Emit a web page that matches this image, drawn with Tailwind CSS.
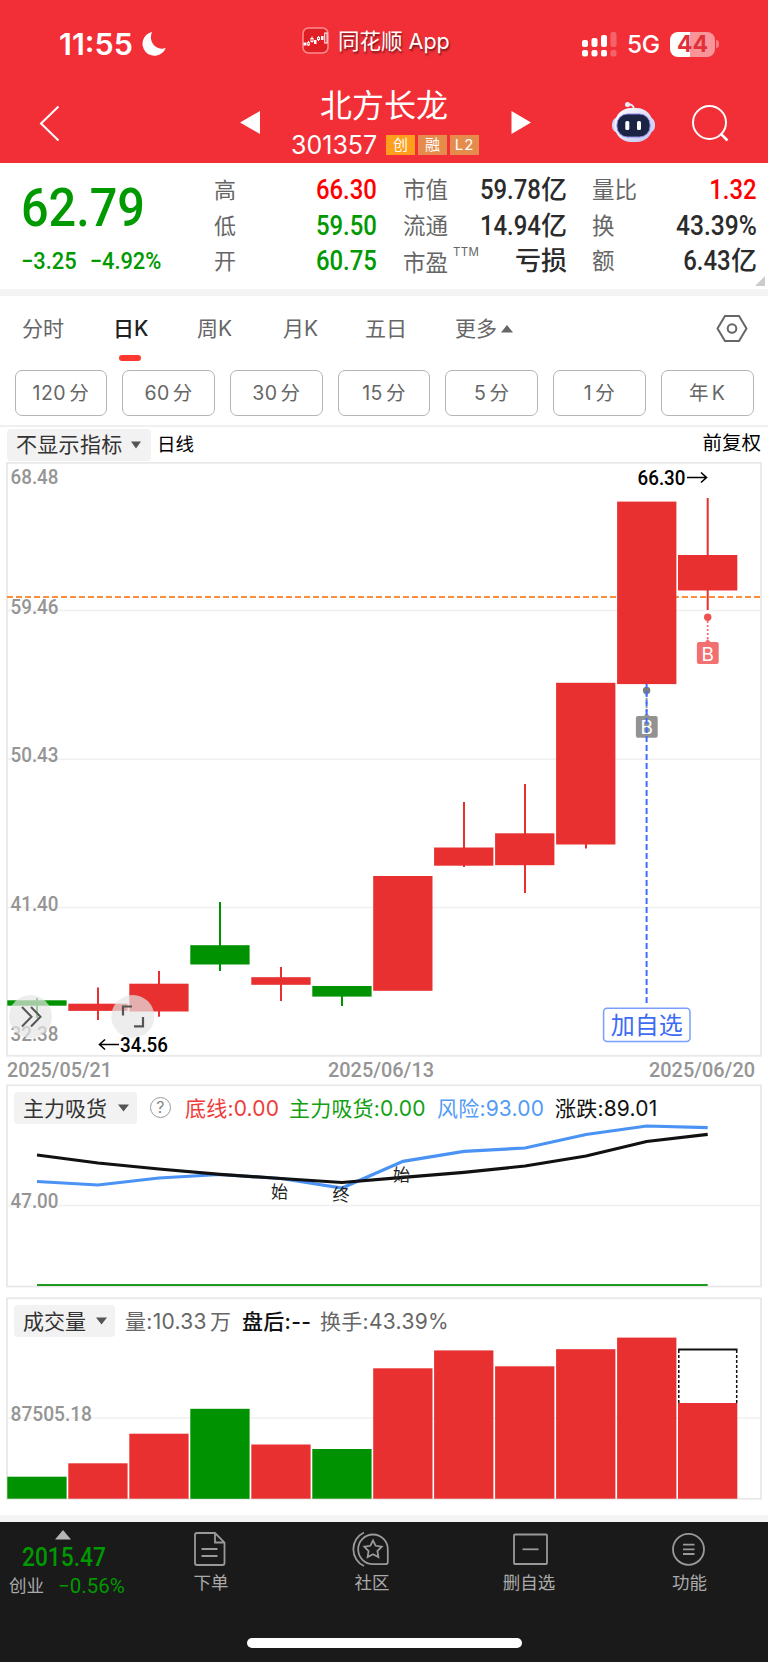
<!DOCTYPE html>
<html lang="zh-Hans">
<head>
    <meta charset="UTF-8">
    <meta name="viewport" content="width=device-width, initial-scale=1.0">
    <title>北方长龙 301357</title>
    <script src="https://cdn.jsdelivr.net/npm/@tailwindcss/browser@4"></script>
</head>
<body class="w-[768px] h-[1662px] overflow-hidden bg-white font-['Inter','Noto_Sans_CJK_SC',sans-serif] text-[#666]">

    <!-- 顶部红色区域 -->
    <header class="h-[163px] bg-[#f22f37] text-white">
        <!-- 状态栏 -->
        <div class="h-[84px] flex items-center">
            <div class="w-[302px] pl-[59px] flex items-center gap-[9px] pt-1">
                <span class="w-[74px] text-[30.5px] leading-none font-semibold whitespace-nowrap">11:55</span>
                <svg class="w-6 h-6" viewBox="0 0 24 24" fill="#fff"><path d="M10 0A12 12 0 1 0 23.8 15.8C15.5 19.500 5.500 10.500 10 0Z"/></svg>
            </div>
            <svg class="w-[27px] h-[27px] mt-[-3px]" viewBox="0 0 27 27" fill="none">
                <rect x="1" y="1" width="25" height="25" rx="5.500" fill="#e01f25" stroke="#fa8d8f" stroke-width="1.500"/>
                <g fill="#fff"><rect x="1.500" y="15.500" width="3" height="3"/><rect x="12" y="13" width="2.500" height="4"/><rect x="19" y="9" width="2.500" height="4"/></g>
                <g stroke="#fff"><path d="M6.500 14v5M10 9.500v6M16.500 9v5"/><rect x="5.700" y="15.500" width="1.600" height="2.500" fill="#e01f25"/><rect x="9" y="11.500" width="2" height="3" fill="#e01f25"/><rect x="15.500" y="10.500" width="2" height="2" fill="#e01f25"/><rect x="22.700" y="6" width="2.300" height="10"/></g>
            </svg>
            <span class="w-[244px] pl-[9px] text-[21.5px] leading-none whitespace-nowrap text-shadow-[1px_2px_2px_rgb(0_0_0/0.5)]">同花顺 App</span>
            <div class="pl-[9px] flex items-center pt-1">
                <svg class="w-[36px] h-[25px]" viewBox="0 0 36 25" fill="#fff">
                    <rect x="0" y="8" width="6" height="7" rx="2"/><rect x="9.500" y="6" width="6" height="9" rx="2"/><rect x="19" y="3" width="6" height="12" rx="2"/><rect x="28.500" y="0" width="6" height="15" rx="2" fill-opacity=".25"/>
                    <rect x="0" y="18" width="6" height="6.500" rx="2"/><rect x="9.500" y="18" width="6" height="6.500" rx="2"/><rect x="19" y="18" width="6" height="6.500" rx="2"/><rect x="28.500" y="18" width="6" height="6.500" rx="2" fill-opacity=".25"/>
                </svg>
                <span class="w-[43px] pl-[9px] text-[24.5px] leading-none font-medium tracking-[-0.3px]">5G</span>
                <div class="ml-[9px] w-[45px] h-[25px] rounded-[8px] bg-linear-to-r from-white from-45% to-[#f89599] to-45% text-center text-[23px] leading-[25px] font-bold text-[#e0303a]">44</div>
                <div class="ml-px w-[3px] h-2 rounded-r-full bg-[#f7777c]"></div>
            </div>
        </div>
        <!-- 股票名称栏 -->
        <div class="h-[79px] flex">
            <svg class="w-[280px] h-[79px]" viewBox="0 0 280 79"><path d="M58.500 22.500L41 39.500L58.500 56.500" fill="none" stroke="#fff" stroke-width="2"/><path d="M240 38.500L260 27V50Z" fill="#fff"/></svg>
            <div class="w-[210px]">
                <h1 class="pl-[40px] pt-[5px] text-[32px] leading-[34px] font-normal whitespace-nowrap">北方长龙</h1>
                <div class="pl-[11px] mt-[10px] flex gap-[3px] items-center">
                    <span class="w-[92px] text-[25px] leading-[24px]">301357</span>
                    <span class="w-[29px] h-5 bg-[#ff9d1c] text-center text-[15px] leading-5">创</span>
                    <span class="w-[29px] h-5 bg-[#e58b4b] text-center text-[15px] leading-5">融</span>
                    <span class="w-[29px] h-5 bg-[#e58b4b] text-center text-[15px] leading-5 tracking-[1px]">L2</span>
                </div>
            </div>
            <svg class="w-[278px] h-[79px]" viewBox="490 84 278 79" fill="none">
                <defs>
                    <linearGradient id="bot" x1="0" y1="0" x2="1" y2="1"><stop offset="0" stop-color="#fff"/><stop offset="1" stop-color="#bfc5f2"/></linearGradient>
                </defs>
                <path d="M511.500 111V134L531 122.500Z" fill="#fff"/>
                <path d="M628 104.500Q634 104 634 110" stroke="#e6e8fa" stroke-width="2"/>
                <circle cx="627.500" cy="104.500" r="2.500" fill="#eef"/>
                <rect x="612" y="117" width="43" height="16" rx="7" fill="#d3d7f8"/>
                <rect x="614.500" y="108" width="38.500" height="34" rx="16.500" fill="url(#bot)"/>
                <rect x="617" y="114" width="33" height="23" rx="10.500" fill="#1c2445" stroke="#8d83e6" stroke-width="1"/>
                <rect x="625.300" y="121" width="4" height="9" rx="1.500" fill="#fff"/><rect x="637" y="121" width="4" height="9" rx="1.500" fill="#fff"/>
                <circle cx="709.500" cy="122.500" r="16.500" stroke="#fff" stroke-width="2"/>
                <path d="M720.500 133.500L727.500 140.500" stroke="#fff" stroke-width="2.500"/>
            </svg>
        </div>
    </header>

    <!-- 行情数据 -->
    <section class="relative h-[126px] flex font-['Roboto','Noto_Sans_CJK_SC',sans-serif]">
        <div class="w-[214px] pl-[21px] text-[#090]">
            <div class="pt-[17px] text-[54px] leading-[56px] font-medium origin-left scale-x-[0.9]">62.79</div>
            <div class="mt-[13px] text-[23.5px] leading-[24px] font-medium origin-left scale-x-[0.93] whitespace-nowrap">−3.25<span class="ml-[14px]">−4.92%</span></div>
        </div>
        <dl class="w-[163px] pt-[10px] text-[22px] leading-[35.5px]">
            <div class="flex justify-between h-[35.5px]"><dt>高</dt><dd class="text-[27px] font-medium text-[#f00] origin-right scale-x-[0.885]">66.30</dd></div>
            <div class="flex justify-between h-[35.5px]"><dt>低</dt><dd class="text-[27px] font-medium text-[#090] origin-right scale-x-[0.885]">59.50</dd></div>
            <div class="flex justify-between h-[35.5px]"><dt>开</dt><dd class="text-[27px] font-medium text-[#090] origin-right scale-x-[0.885]">60.75</dd></div>
        </dl>
        <dl class="ml-[26px] w-[164px] pt-[10px] text-[22.5px] leading-[35.5px]">
            <div class="flex justify-between h-[35.5px]"><dt>市值</dt><dd class="flex font-medium text-[#2b2b2b]"><span class="text-[27px] origin-right scale-x-[0.885]">59.78</span><span class="text-[26px]">亿</span></dd></div>
            <div class="flex justify-between h-[35.5px]"><dt>流通</dt><dd class="flex font-medium text-[#2b2b2b]"><span class="text-[27px] origin-right scale-x-[0.885]">14.94</span><span class="text-[26px]">亿</span></dd></div>
            <div class="flex h-[35.5px]"><dt class="pt-[2px]">市盈</dt><span class="ml-[5px] mt-[-9px] font-['Inter'] text-[11.5px] tracking-[0.3px]">TTM</span><dd class="ml-auto text-[26px] font-medium text-[#2b2b2b]">亏损</dd></div>
        </dl>
        <dl class="ml-[25px] w-[165px] pt-[10px] text-[22.5px] leading-[35.5px]">
            <div class="flex justify-between h-[35.5px]"><dt>量比</dt><dd class="text-[27px] font-medium text-[#f00] origin-right scale-x-[0.885]">1.32</dd></div>
            <div class="flex justify-between h-[35.5px]"><dt>换</dt><dd class="text-[27px] font-medium text-[#2b2b2b] origin-right scale-x-[0.91]">43.39%</dd></div>
            <div class="flex justify-between h-[35.5px]"><dt>额</dt><dd class="flex font-medium text-[#2b2b2b]"><span class="text-[27px] origin-right scale-x-[0.885]">6.43</span><span class="text-[26px]">亿</span></dd></div>
        </dl>
        <svg class="absolute right-[3px] bottom-[3px] w-[10px] h-[10px]" viewBox="0 0 10 10"><path d="M10 0V10H0Z" fill="#ccc"/></svg>
    </section>
    <div class="h-[7px] bg-[#f4f4f4]"></div>

    <!-- K线周期 -->
    <nav class="relative h-[74px] pt-[16px] pl-[22px] flex text-[21px] leading-[33px] whitespace-nowrap">
        <span class="w-[91px]">分时</span>
        <span class="w-[84px] font-medium text-[#222]">日K</span>
        <span class="w-[86px]">周K</span>
        <span class="w-[82px]">月K</span>
        <span class="w-[90px]">五日</span>
        <span class="w-[46px]">更多</span>
        <svg class="w-[12px] h-[32px]" viewBox="0 0 12 32"><path d="M6 13L12 20.500H0Z" fill="#666"/></svg>
        <svg class="ml-[203px] w-[32px] h-[32px]" viewBox="0 0 32 32" fill="none" stroke="#666" stroke-width="2"><path d="M9 4H23L30.500 16.500L23 29H9L1.500 16.500Z"/><circle cx="16" cy="16.500" r="4.300"/></svg>
        <div class="absolute left-[119px] top-[59px] w-[22px] h-[6px] rounded-full bg-[#ff3830]"></div>
    </nav>
    <div class="h-[55px] px-[14.5px] flex gap-[15px] text-[19.5px] leading-[45px] text-center tracking-[0.5px] [word-spacing:-3px]">
        <span class="w-[93px] h-[46px] rounded-[7px] border border-[#b4b4b4]">120 分</span>
        <span class="w-[93px] h-[46px] rounded-[7px] border border-[#b4b4b4]">60 分</span>
        <span class="w-[93px] h-[46px] rounded-[7px] border border-[#b4b4b4]">30 分</span>
        <span class="w-[93px] h-[46px] rounded-[7px] border border-[#b4b4b4]">15 分</span>
        <span class="w-[93px] h-[46px] rounded-[7px] border border-[#b4b4b4]">5 分</span>
        <span class="w-[93px] h-[46px] rounded-[7px] border border-[#b4b4b4]">1 分</span>
        <span class="w-[93px] h-[46px] rounded-[7px] border border-[#b4b4b4]">年 K</span>
    </div>

    <!-- 指标选择 -->
    <div class="h-[37px] border-t-2 border-[#f0f0f0] pl-[7px] pr-[7px] flex text-[21px] leading-[31px] text-[#333]">
        <div class="mt-[2px] w-[144px] h-[32px] pl-[9px] rounded-[4px] bg-[#f2f2f2] flex tracking-[0.3px] whitespace-nowrap">不显示指标
            <svg class="ml-[8px] w-[10px] h-[32px]" viewBox="0 0 10 32"><path d="M0 12.500H10L5 19.500Z" fill="#555"/></svg>
        </div>
        <span class="ml-[6px] mt-[2px] text-[18.5px] text-black">日线</span>
        <span class="ml-auto text-[19.5px] leading-[32px] text-black">前复权</span>
    </div>

    <!-- K线主图 -->
    <svg class="block w-[768px] h-[622px] font-['Roboto','Noto_Sans_CJK_SC',sans-serif]" viewBox="0 462 768 622" fill="none">
        <g stroke="#f0f0f0" stroke-width="1.500"><path d="M7 610.500H761M7 759.300H761M7 907.500H761"/></g>
        <rect x="7" y="462.800" width="754" height="593" stroke="#e8e8e8" stroke-width="1.800"/>
        <g fill="#959595" font-size="21" font-weight="500">
            <text x="10.500" y="483.500" textLength="48" lengthAdjust="spacingAndGlyphs">68.48</text>
            <text x="10.500" y="614" textLength="48" lengthAdjust="spacingAndGlyphs">59.46</text>
            <text x="10.500" y="762" textLength="48" lengthAdjust="spacingAndGlyphs">50.43</text>
            <text x="10.500" y="910.500" textLength="48" lengthAdjust="spacingAndGlyphs">41.40</text>
            <text x="10.500" y="1041" textLength="48" lengthAdjust="spacingAndGlyphs">32.38</text>
            <text x="7" y="1077" textLength="105" lengthAdjust="spacingAndGlyphs">2025/05/21</text>
            <text x="328" y="1077" textLength="106" lengthAdjust="spacingAndGlyphs">2025/06/13</text>
            <text x="649" y="1077" textLength="106" lengthAdjust="spacingAndGlyphs">2025/06/20</text>
        </g>
        <path d="M7 597H761" stroke="#fc8f3d" stroke-width="2" stroke-dasharray="6 3"/>
        <!-- 阴线 -->
        <g fill="#009200">
            <rect x="7.300" y="1000.300" width="59.300" height="5.400"/><rect x="36" y="998" width="2" height="20"/>
            <rect x="190.300" y="945.200" width="59.300" height="19.300"/><rect x="219" y="902" width="2" height="69"/>
            <rect x="312.300" y="986" width="59.300" height="10.600"/><rect x="341" y="986" width="2" height="20"/>
        </g>
        <!-- 阳线 -->
        <g fill="#e83030">
            <rect x="68.300" y="1003.700" width="59.300" height="7.200"/><rect x="97" y="987.500" width="2" height="32.500"/>
            <rect x="129.300" y="983.700" width="59.300" height="27.800"/><rect x="158" y="971" width="2" height="45.700"/>
            <rect x="251.300" y="977.200" width="59.300" height="7.600"/><rect x="280" y="967" width="2" height="34"/>
            <rect x="373.200" y="876" width="59.300" height="114.800"/>
            <rect x="434.100" y="847.500" width="59.300" height="18.200"/><rect x="463" y="802" width="2" height="65"/>
            <rect x="495.100" y="833.300" width="59.300" height="31.900"/><rect x="524" y="784" width="2" height="109"/>
            <rect x="556.100" y="682.800" width="59.300" height="161.700"/><rect x="585" y="844" width="2" height="4.500"/>
            <rect x="617.100" y="501.600" width="59.300" height="182.500"/>
            <rect x="678" y="555" width="59.300" height="35.500"/><rect x="706.700" y="498" width="2" height="112"/>
        </g>
        <!-- 高低价标注 -->
        <g fill="#000" font-size="21" font-weight="500">
            <text x="637.500" y="485" textLength="48" lengthAdjust="spacingAndGlyphs">66.30</text>
            <text x="120" y="1051.500" textLength="48" lengthAdjust="spacingAndGlyphs">34.56</text>
        </g>
        <path d="M687 477.500H706M701 472.500L706.500 477.500L701 482.500M119 1044.500H100M105 1039.500L99.500 1044.500L105 1049.500" stroke="#000" stroke-width="1.600"/>
        <!-- 买点 -->
        <circle cx="707.700" cy="617.200" r="3.700" fill="#ef5050"/>
        <path d="M707.700 621V640" stroke="#f27070" stroke-width="1.800" stroke-dasharray="2 2"/>
        <path d="M707.700 639L711.500 643H704Z" fill="#f27070"/>
        <rect x="696.900" y="642" width="21.800" height="22" rx="2" fill="#f27070"/>
        <text x="707.800" y="660.500" text-anchor="middle" font-size="19" fill="#fff" font-family="Inter">B</text>
        <circle cx="646.600" cy="690.500" r="3.700" fill="#7b7b7b"/>
        <path d="M646.600 694V714" stroke="#929292" stroke-width="1.800" stroke-dasharray="2 2"/>
        <path d="M646.600 713L650.500 717H643Z" fill="#929292"/>
        <rect x="635.900" y="716" width="21.800" height="21.800" rx="2" fill="#929292"/>
        <text x="646.800" y="734" text-anchor="middle" font-size="19" fill="#fff" font-family="Inter">B</text>
        <path d="M646.600 684V1003" stroke="#3c6ffc" stroke-width="2" stroke-dasharray="6 3" stroke-dashoffset="2"/>
        <rect x="603.600" y="1008.200" width="86.400" height="33.300" rx="3.500" fill="#fff" stroke="#7c9efb" stroke-width="1.500"/>
        <text x="646.800" y="1033.500" text-anchor="middle" font-size="24" fill="#3c6cf5">加自选</text>
        <!-- 浮动按钮 -->
        <circle cx="30.500" cy="1016.500" r="21.500" fill="#e6e6e6" fill-opacity=".7"/>
        <path d="M22 1007L31.500 1016.700L22 1026.500M31 1007L40.500 1016.700L31 1026.500" stroke="#555" stroke-width="2"/>
        <circle cx="132.800" cy="1016.500" r="21.500" fill="#e6e6e6" fill-opacity=".7"/>
        <path d="M123 1015.500V1006.500H132M134 1026.300H143V1017" stroke="#555" stroke-width="2.200"/>
    </svg>

    <!-- 主力吸货 -->
    <section class="h-[213px] relative">
        <svg class="block w-[768px] h-[213px] font-['Roboto','Noto_Sans_CJK_SC',sans-serif]" viewBox="0 1084 768 213" fill="none">
            <path d="M7 1205.500H761" stroke="#f0f0f0" stroke-width="1.500"/>
            <rect x="7" y="1085.300" width="754" height="201.200" stroke="#e8e8e8" stroke-width="1.800"/>
            <text x="10.500" y="1208" font-size="21" font-weight="500" fill="#959595" textLength="48" lengthAdjust="spacingAndGlyphs">47.00</text>
            <path d="M37 1285H707.700" stroke="#1f9a1f" stroke-width="2"/>
            <polyline points="37,1181.500 98,1185 159,1178 220,1174.500 281,1178.500 342,1188 403,1161.300 464,1151.300 525,1148 586,1134.500 646.600,1126 707.700,1127.700" stroke="#4a93f5" stroke-width="3.200"/>
            <polyline points="37,1155 98,1163 159,1169 220,1174.300 281,1178.500 342,1182.500 403,1177.300 464,1172.300 525,1166 586,1156 646.600,1141.500 707.700,1134.300" stroke="#111" stroke-width="3.200"/>
            <g font-size="17" fill="#222" text-anchor="middle"><text x="279.500" y="1197.500">始</text><text x="341" y="1201">终</text><text x="401.500" y="1180.500">始</text></g>
        </svg>
        <!-- 指标数值 -->
        <div class="absolute left-[14px] top-[8px] flex h-[32px] text-[21px] leading-[34px] tracking-[0.2px] whitespace-nowrap">
            <div class="w-[123px] pl-[9px] rounded-[4px] bg-[#f2f2f2] flex tracking-normal leading-[33px] text-[#333]">主力吸货
                <svg class="ml-[11px] w-[11px] h-[32px]" viewBox="0 0 11 32"><path d="M0 12.500H11L5.500 19.500Z" fill="#555"/></svg>
            </div>
            <span class="ml-[13px] mt-[5px] w-[21px] h-[21px] rounded-full border-[1.5px] border-[#999] text-center text-[16px] leading-[19px] text-[#888]">?</span>
            <span class="ml-[14px] w-[104px] text-[#f03b3b]">底线:0.00</span>
            <span class="w-[148px] text-[#12a012]">主力吸货:0.00</span>
            <span class="w-[118px] text-[#549bf5]">风险:93.00</span>
            <span class="text-[#111]">涨跌:89.01</span>
        </div>
    </section>

    <!-- 成交量 -->
    <section class="h-[218px] relative">
        <svg class="block w-[768px] h-[218px] font-['Roboto',sans-serif]" viewBox="0 1297 768 218" fill="none">
            <path d="M7 1418H761" stroke="#f0f0f0" stroke-width="1.500"/>
            <rect x="7" y="1298.300" width="754" height="200.500" stroke="#e8e8e8" stroke-width="1.800"/>
            <text x="10.500" y="1421" font-size="21" font-weight="500" fill="#959595" textLength="81.500" lengthAdjust="spacingAndGlyphs">87505.18</text>
            <g fill="#009200">
                <rect x="7.300" y="1476.700" width="59.300" height="22"/>
                <rect x="190.300" y="1408.800" width="59.300" height="90"/>
                <rect x="312.300" y="1449" width="59.300" height="49.700"/>
            </g>
            <g fill="#e83030">
                <rect x="68.300" y="1463.300" width="59.300" height="35.400"/>
                <rect x="129.300" y="1433.700" width="59.300" height="65"/>
                <rect x="251.300" y="1444.500" width="59.300" height="54.200"/>
                <rect x="373.200" y="1368.300" width="59.300" height="130.400"/>
                <rect x="434.100" y="1350.400" width="59.300" height="148.300"/>
                <rect x="495.100" y="1366.300" width="59.300" height="132.400"/>
                <rect x="556.100" y="1349.200" width="59.300" height="149.500"/>
                <rect x="617.100" y="1337.600" width="59.300" height="161.100"/>
                <rect x="678" y="1403" width="59.300" height="95.700"/>
            </g>
            <path d="M678 1349.500H737.500" stroke="#111" stroke-width="1.800"/>
            <path d="M678.800 1350V1403M736.700 1350V1403" stroke="#111" stroke-width="1.500" stroke-dasharray="3 2"/>
        </svg>
        <div class="absolute left-[14px] top-[8px] flex h-[32px] text-[21px] leading-[33px] tracking-[0.3px] [word-spacing:-3px] whitespace-nowrap">
            <div class="w-[101px] pl-[9px] rounded-[4px] bg-[#f2f2f2] flex tracking-normal text-[#333]">成交量
                <svg class="ml-[10px] w-[11px] h-[32px]" viewBox="0 0 11 32"><path d="M0 12.500H11L5.500 19.500Z" fill="#555"/></svg>
            </div>
            <span class="ml-[10px] w-[117px]">量:10.33 万</span>
            <span class="w-[78px] font-medium text-[#111]">盘后:--</span>
            <span>换手:43.39%</span>
        </div>
    </section>
    <div class="h-[7px] bg-[#f4f4f4]"></div>

    <!-- 底部导航 -->
    <footer class="h-[140px] bg-[#1a1a1a] text-[#aaa] relative">
        <div class="flex text-[17.5px] leading-[24px] whitespace-nowrap">
            <div class="w-[152px] pt-[8px] font-['Roboto','Noto_Sans_CJK_SC',sans-serif]">
                <svg class="ml-[55px] w-4 h-[10px]" viewBox="0 0 16 10"><path d="M8 0L16 9.500H0Z" fill="#b5b5b5"/></svg>
                <div class="ml-[22px] mt-[5px] text-[25px] leading-[26px] font-medium text-[#090] origin-left scale-x-[0.91]">2015.47</div>
                <div class="ml-[9px] mt-[3px] flex leading-[24px]"><span class="w-[49px]">创业</span><span class="text-[20.5px] text-[#090] origin-left">−0.56%</span></div>
            </div>
            <div class="w-[118px] pt-[6px] flex flex-col items-center">
                <svg class="w-[40px] h-[40px]" viewBox="191 1527 40 40" fill="none" stroke="#999" stroke-width="1.800"><path d="M215 1532H197Q195 1532 195 1534V1562Q195 1564 197 1564H222.500Q224.500 1564 224.500 1562V1541.500ZM215 1532V1541.500H224.500M201.500 1548H217.500M201.500 1555H217.500"/></svg>
                <span class="mt-[3px]">下单</span>
            </div>
            <div class="w-[204px] pt-[6px] flex flex-col items-center">
                <svg class="w-[40px] h-[40px]" viewBox="352 1527 40 40" fill="none" stroke="#999" stroke-width="1.800"><path d="M373 1533.500A14.800 14.800 0 0 0 373 1563.200H385.500Q387.800 1563.200 387.800 1561V1548.500A14.800 14.800 0 0 0 373 1533.500ZM364 1531.500A18.500 18.500 0 0 0 364 1565"/><path d="M373 1539.500L375.700 1544.800L381.700 1545.700L377.400 1550L378.400 1556L373 1553.200L367.600 1556L368.600 1550L364.300 1545.700L370.300 1544.800Z"/></svg>
                <span class="mt-[3px]">社区</span>
            </div>
            <div class="w-[110px] pt-[6px] flex flex-col items-center">
                <svg class="w-[40px] h-[40px]" viewBox="509 1527 40 40" fill="none" stroke="#999" stroke-width="1.800"><rect x="514" y="1533.500" width="33" height="29.500" rx="1"/><path d="M522.500 1548.300H538.500"/></svg>
                <span class="mt-[3px]">删自选</span>
            </div>
            <div class="w-[184px] pl-[27px] pt-[6px] flex flex-col items-center">
                <svg class="w-[40px] h-[40px]" viewBox="669 1527 40 40" fill="none" stroke="#999" stroke-width="1.800"><circle cx="687.500" cy="1548.300" r="15.500"/><path d="M682 1543.700H693.500M682 1548.300H693.500M682 1553H693.500"/></svg>
                <span class="mt-[3px]">功能</span>
            </div>
        </div>
        <div class="absolute left-[247px] top-[116px] w-[275px] h-[10px] rounded-full bg-white"></div>
    </footer>
</body>
</html>
